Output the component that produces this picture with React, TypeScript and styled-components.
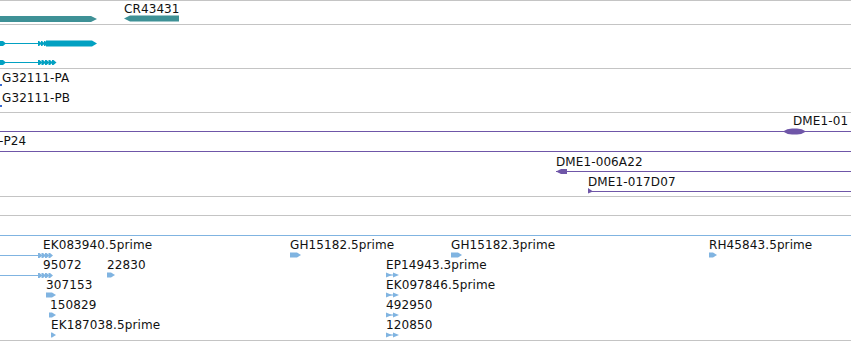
import styled, { createGlobalStyle } from "styled-components";

const GlobalStyle = createGlobalStyle`
  body {
    margin: 0;
    background: #fff;
    font-family: "DejaVu Sans", "Liberation Sans", sans-serif;
  }
`;

const Browser = styled.div`
  width: 851px;
  height: 341px;
  box-sizing: border-box;
  overflow: hidden;
  border-top: 1px solid #c4c4c4;
  display: flex;
  flex-direction: column;
`;

const Track = styled.div<{ $height: number }>`
  position: relative;
  flex: 0 0 auto;
  height: ${(p) => p.$height}px;
  border-bottom: 1px solid #c4c4c4;
  overflow: hidden;
`;

const Art = styled.svg`
  position: absolute;
  left: 0;
  top: 0;
  width: 851px;
  height: 100%;
`;

const Label = styled.span.attrs<{ $x: number; $y: number }>((p) => ({
  style: { left: p.$x, top: p.$y },
}))`
  position: absolute;
  font-size: 12px;
  line-height: 14px;
  letter-spacing: 0.1px;
  color: #111;
  white-space: nowrap;
`;

const TEAL = "#3e9196";
const CYAN = "#02a1c2";
const BLUE = "#3a6ad0";
const PURPLE = "#6f56a8";
const EST = "#80b4e1";

const right = (x1: number, x2: number, cy: number, h: number, tip: number) =>
  `${x1},${cy - h / 2} ${x2 - tip},${cy - h / 2} ${x2},${cy} ${x2 - tip},${cy + h / 2} ${x1},${cy + h / 2}`;

const left = (x1: number, x2: number, cy: number, h: number, tip: number) =>
  `${x1},${cy} ${x1 + tip},${cy - h / 2} ${x2},${cy - h / 2} ${x2},${cy + h / 2} ${x1 + tip},${cy + h / 2}`;

function Chevrons({ x, n, step, cy, color }: { x: number; n: number; step: number; cy: number; color: string }) {
  return (
    <>
      {Array.from({ length: n }, (_, i) => (
        <polygon key={i} points={right(x + i * step, x + i * step + step + 1, cy, 5, 3)} fill={color} />
      ))}
    </>
  );
}

type Lab = { t: string; x: number; y: number };

const estLabels: Lab[] = [
  { t: "EK083940.5prime", x: 43, y: 22 },
  { t: "GH15182.5prime", x: 290, y: 22 },
  { t: "GH15182.3prime", x: 451, y: 22 },
  { t: "RH45843.5prime", x: 709, y: 22 },
  { t: "95072", x: 43, y: 42 },
  { t: "22830", x: 107, y: 42 },
  { t: "EP14943.3prime", x: 386, y: 42 },
  { t: "307153", x: 46, y: 62 },
  { t: "EK097846.5prime", x: 386, y: 62 },
  { t: "150829", x: 50, y: 82 },
  { t: "492950", x: 386, y: 82 },
  { t: "EK187038.5prime", x: 51, y: 102 },
  { t: "120850", x: 386, y: 102 },
];

const rowY = (k: number) => 39.5 + k * 20;

export default function App() {
  return (
    <>
      <GlobalStyle />
      <Browser>
        <Track $height={23}>
          <Art>
            <polygon points={right(0, 97, 18, 6, 6)} fill={TEAL} />
            <polygon points={left(124, 179, 17.5, 6, 6)} fill={TEAL} />
          </Art>
          <Label $x={124} $y={1}>CR43431</Label>
        </Track>

        <Track $height={43}>
          <Art>
            <line x1={0} x2={40} y1={18.5} y2={18.5} stroke={CYAN} />
            <polygon points={right(0, 6, 18.5, 5, 3)} fill={CYAN} />
            <Chevrons x={38} n={3} step={3} cy={18.5} color={CYAN} />
            <polygon points={right(46, 97, 18.5, 6, 5)} fill={CYAN} />
            <line x1={0} x2={40} y1={37.5} y2={37.5} stroke={CYAN} />
            <polygon points={right(0, 6, 37.5, 5, 3)} fill={CYAN} />
            <Chevrons x={38} n={5} step={3.5} cy={37.5} color={CYAN} />
          </Art>
        </Track>

        <Track $height={43}>
          <Art>
            <rect x={0} y={15} width={2} height={2} fill={BLUE} />
            <rect x={0} y={36} width={2} height={2} fill={BLUE} />
          </Art>
          <Label $x={2} $y={2}>G32111-PA</Label>
          <Label $x={2} $y={22}>G32111-PB</Label>
        </Track>

        <Track $height={83}>
          <Art>
            <line x1={0} x2={851} y1={18.5} y2={18.5} stroke={PURPLE} />
            <path
              d="M783,18.5 Q787,15.5 792,15.5 L797,15.5 Q802,15.5 806,18.5 Q802,21.5 797,21.5 L792,21.5 Q787,21.5 783,18.5Z"
              fill={PURPLE}
            />
            <line x1={0} x2={851} y1={38.5} y2={38.5} stroke={PURPLE} />
            <line x1={556} x2={851} y1={58.5} y2={58.5} stroke={PURPLE} />
            <polygon points={left(556, 567, 58.5, 5, 5)} fill={PURPLE} />
            <line x1={588} x2={851} y1={78.5} y2={78.5} stroke={PURPLE} />
            <polygon points="588,75 593,78.5 588,80.5" fill={PURPLE} />
          </Art>
          <Label $x={793} $y={1}>DME1-01</Label>
          <Label $x={-1} $y={21}>-P24</Label>
          <Label $x={556} $y={42}>DME1-006A22</Label>
          <Label $x={588} $y={62}>DME1-017D07</Label>
        </Track>

        <Track $height={18} />

        <Track $height={124}>
          <Art>
            <line x1={0} x2={851} y1={19.5} y2={19.5} stroke={EST} />
            <line x1={0} x2={40} y1={rowY(0)} y2={rowY(0)} stroke={EST} />
            <Chevrons x={38} n={4} step={3.5} cy={rowY(0)} color={EST} />
            <line x1={0} x2={40} y1={rowY(1)} y2={rowY(1)} stroke={EST} />
            <Chevrons x={38} n={4} step={3.5} cy={rowY(1)} color={EST} />
            <polygon points={right(290, 301, rowY(0) - 0.5, 5, 4)} fill={EST} />
            <polygon points={right(451, 462, rowY(0) - 0.5, 5, 4)} fill={EST} />
            <polygon points={right(709, 717, rowY(0) - 0.5, 5, 4)} fill={EST} />
            <polygon points={right(107, 115, rowY(1) - 0.5, 5, 4)} fill={EST} />
            <polygon points={right(46, 56, rowY(2) - 0.5, 5, 4)} fill={EST} />
            <polygon points={right(49, 56, rowY(3) - 0.5, 5, 4)} fill={EST} />
            <polygon points={right(51, 56, rowY(4) - 0.5, 5, 4)} fill={EST} />
            {[1, 2, 3, 4].map((k) => (
              <g key={k}>
                <line x1={388} x2={394} y1={rowY(k) - 0.5} y2={rowY(k) - 0.5} stroke={EST} />
                <polygon points={`386,${rowY(k) - 3} 392,${rowY(k) - 0.5} 386,${rowY(k) + 2}`} fill={EST} />
                <polygon points={`393,${rowY(k) - 3} 399,${rowY(k) - 0.5} 393,${rowY(k) + 2}`} fill={EST} />
              </g>
            ))}
          </Art>
          {estLabels.map((l) => (
            <Label key={l.t} $x={l.x} $y={l.y}>
              {l.t}
            </Label>
          ))}
        </Track>
      </Browser>
    </>
  );
}
